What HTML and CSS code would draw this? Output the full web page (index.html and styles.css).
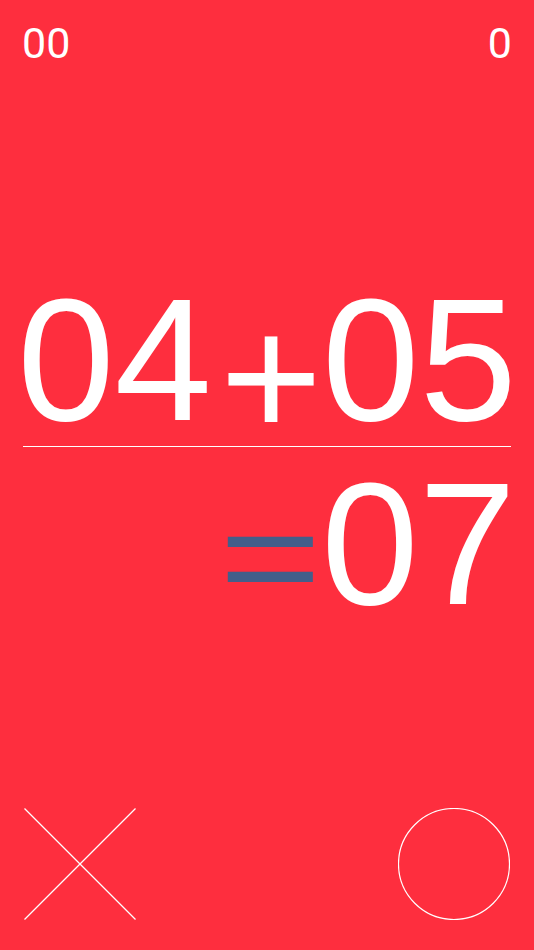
FILE: index.html
```html
<!DOCTYPE html>
<html>
<head>
<meta charset="utf-8">
<link rel="stylesheet" href="styles.css">
</head>
<body>
<div class="screen">
  <div class="top">
    <span class="score">00</span>
    <span class="score">0</span>
  </div>
  <div class="equation">
    <div class="expr">04<span class="plus">+</span>05</div>
    <div class="rule"></div>
    <div class="result"><span class="eq">=</span>07</div>
  </div>
  <div class="buttons">
    <svg class="btn" width="112" height="112" viewBox="0 0 112 112">
      <line x1="0.5" y1="0.5" x2="111.5" y2="111.5" stroke="#fff" stroke-width="1.2"/>
      <line x1="111.5" y1="0.5" x2="0.5" y2="111.5" stroke="#fff" stroke-width="1.2"/>
    </svg>
    <svg class="btn" width="112" height="112" viewBox="0 0 112 112">
      <circle cx="56" cy="56" r="55.5" fill="none" stroke="#fff" stroke-width="1.2"/>
    </svg>
  </div>
</div>
</body>
</html>
```

FILE: styles.css
```css
html, body {
  margin: 0;
  padding: 0;
  background: #fe2e3e;
}
.screen {
  width: 534px;
  height: 950px;
  display: flex;
  flex-direction: column;
  overflow: hidden;
  color: #fff;
}
.top {
  display: flex;
  justify-content: space-between;
  padding: 22px 22px 0 22px;
  height: 43px;
}
.score {
  font-family: Roboto, "Liberation Sans", sans-serif;
  font-size: 43px;
  line-height: 43px;
}
.equation {
  margin-top: 207px;
  display: flex;
  flex-direction: column;
  font-family: "Liberation Sans", Arial, sans-serif;
  font-size: 175px;
}
.expr {
  line-height: 175px;
  height: 175px;
  text-align: center;
  white-space: nowrap;
}
.plus {
  margin-left: 8px;
  vertical-align: -17px;
}
.rule {
  height: 1px;
  background: #fff;
  margin: -1px 23px 0 23px;
}
.result {
  margin-top: 9px;
  line-height: 175px;
  height: 175px;
  text-align: right;
  padding-right: 18px;
  white-space: nowrap;
}
.eq {
  display: inline-block;
  color: #445e8a;
  transform-origin: 50% 148px;
  transform: scaleY(0.81);
  vertical-align: -2px;
}
.buttons {
  margin-top: 177px;
  display: flex;
  justify-content: space-between;
  padding: 0 24px;
}
.btn {
  display: block;
}
```
